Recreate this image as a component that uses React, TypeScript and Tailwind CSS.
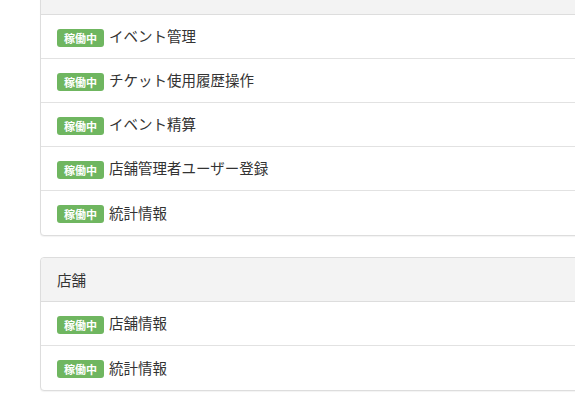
import React from "react"

const Badge = () => (
  <span className="inline-block rounded-[3px] bg-[#6fb660] px-[7px] py-[2px] text-[11px] font-bold leading-[14px] text-white mr-[5px] mt-[2px]">
    稼働中
  </span>
)

const Panel = ({
  title,
  items,
  className = ""
}: {
  title: string
  items: string[]
  className?: string
}) => (
  <div
    className={`w-[560px] rounded-[4px] border border-[#dddddd] bg-white shadow-[0_1px_1px_rgba(0,0,0,0.05)] ${className}`}
  >
    <div className="h-[44px] flex items-center px-[16px] bg-[#f3f3f3] border-b border-[#dddddd] rounded-t-[4px] text-[14.5px] text-[#333]">
      {title}
    </div>
    {items.map((item, i) => (
      <div
        key={i}
        className={`h-[44px] flex items-center px-[16px] text-[14.5px] text-[#333] ${
          i < items.length - 1 ? "border-b border-[#e2e2e2]" : ""
        }`}
      >
        <Badge />
        <span className="-mt-[1px]">{item}</span>
      </div>
    ))}
  </div>
)

export default function App() {
  return (
    <div
      className="w-[575px] h-[400px] overflow-hidden bg-white pl-[40px]"
      style={{ fontFamily: '"Noto Sans CJK JP", "Noto Sans", sans-serif' }}
    >
      <Panel
        className="-mt-[30px]"
        title=""
        items={["イベント管理", "チケット使用履歴操作", "イベント精算", "店舗管理者ユーザー登録", "統計情報"]}
      />
      <Panel className="mt-[21px]" title="店舗" items={["店舗情報", "統計情報"]} />
    </div>
  )
}
